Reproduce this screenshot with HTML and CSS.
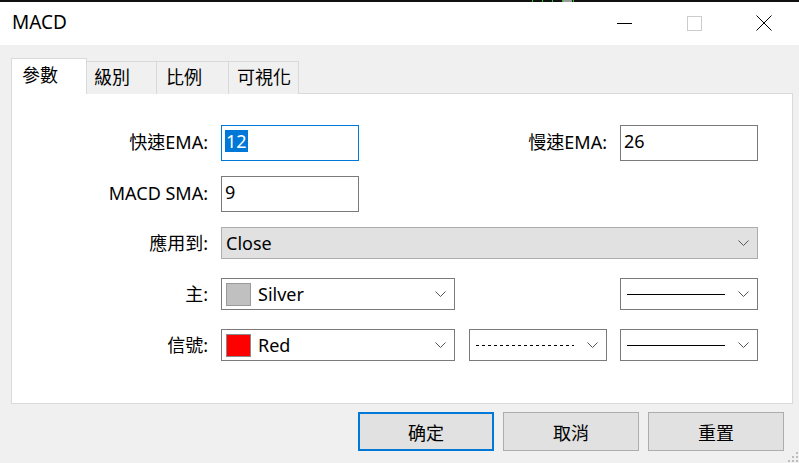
FILE: index.html
```html
<!DOCTYPE html>
<html lang="zh-Hant">
<head>
<meta charset="utf-8">
<title>MACD</title>
<link rel="stylesheet" href="styles.css">
</head>
<body>
<div class="window">
  <div class="topline">
    <span class="mark"></span><span class="mark"></span><span class="mark"></span><span class="mark"></span><span class="markbox"></span><span class="mark"></span>
  </div>
  <header class="titlebar">
    <span class="title">MACD</span>
    <div class="controls">
      <span class="ctl"><svg width="15" height="15" viewBox="0 0 15 15"><line x1="0" y1="7.5" x2="15" y2="7.5" stroke="#000" stroke-width="1"/></svg></span>
      <span class="ctl"><svg width="15" height="15" viewBox="0 0 15 15"><rect x="0.5" y="0.5" width="14" height="14" fill="none" stroke="#cccccc" stroke-width="1"/></svg></span>
      <span class="ctl"><svg width="16" height="16" viewBox="0 0 16 16"><path d="M0.5 0.5 L15.5 15.5 M15.5 0.5 L0.5 15.5" stroke="#000" stroke-width="1" fill="none"/></svg></span>
    </div>
  </header>
  <main class="body">
    <nav class="tabs">
      <span class="tab active">參數</span>
      <span class="tab t2">級別</span>
      <span class="tab t3">比例</span>
      <span class="tab t4">可視化</span>
    </nav>
    <section class="panel">
      <div class="row r1">
        <label class="lbl">快速EMA:</label>
        <div class="edit focus c-a"><span class="sel">12</span></div>
        <label class="lbl c-mid">慢速EMA:</label>
        <div class="edit c-f">26</div>
      </div>
      <div class="row r2">
        <label class="lbl">MACD SMA:</label>
        <div class="edit c-a">9</div>
      </div>
      <div class="row r3">
        <label class="lbl">應用到:</label>
        <div class="combo grey c-all"><span class="val">Close</span>
          <svg class="chev" width="11" height="6" viewBox="0 0 11 6"><polyline points="0.5,0.5 5.5,5.5 10.5,0.5" fill="none" stroke="#555" stroke-width="1"/></svg>
        </div>
      </div>
      <div class="row r4">
        <label class="lbl">主:</label>
        <div class="combo c-ab"><span class="swatch silver"></span><span class="val">Silver</span>
          <svg class="chev" width="11" height="6" viewBox="0 0 11 6"><polyline points="0.5,0.5 5.5,5.5 10.5,0.5" fill="none" stroke="#555" stroke-width="1"/></svg>
        </div>
        <div class="combo c-f"><span class="line solid"></span>
          <svg class="chev" width="11" height="6" viewBox="0 0 11 6"><polyline points="0.5,0.5 5.5,5.5 10.5,0.5" fill="none" stroke="#555" stroke-width="1"/></svg>
        </div>
      </div>
      <div class="row r5">
        <label class="lbl">信號:</label>
        <div class="combo c-ab"><span class="swatch red"></span><span class="val">Red</span>
          <svg class="chev" width="11" height="6" viewBox="0 0 11 6"><polyline points="0.5,0.5 5.5,5.5 10.5,0.5" fill="none" stroke="#555" stroke-width="1"/></svg>
        </div>
        <div class="combo c-d"><span class="line dashed"></span>
          <svg class="chev" width="11" height="6" viewBox="0 0 11 6"><polyline points="0.5,0.5 5.5,5.5 10.5,0.5" fill="none" stroke="#555" stroke-width="1"/></svg>
        </div>
        <div class="combo c-f"><span class="line solid"></span>
          <svg class="chev" width="11" height="6" viewBox="0 0 11 6"><polyline points="0.5,0.5 5.5,5.5 10.5,0.5" fill="none" stroke="#555" stroke-width="1"/></svg>
        </div>
      </div>
    </section>
    <footer class="buttons">
      <button class="btn default">确定</button>
      <button class="btn">取消</button>
      <button class="btn">重置</button>
    </footer>
  </main>
  <svg class="grip" width="12" height="12" viewBox="0 0 12 12">
    <rect x="9" y="1" width="2" height="2" fill="#bdbdbd"/>
    <rect x="5" y="5" width="2" height="2" fill="#bdbdbd"/>
    <rect x="9" y="5" width="2" height="2" fill="#bdbdbd"/>
    <rect x="1" y="9" width="2" height="2" fill="#bdbdbd"/>
    <rect x="5" y="9" width="2" height="2" fill="#bdbdbd"/>
    <rect x="9" y="9" width="2" height="2" fill="#bdbdbd"/>
  </svg>
</div>
</body>
</html>
```

FILE: styles.css
```css
* { box-sizing: border-box; }
html, body { margin: 0; padding: 0; }
body {
  width: 799px;
  height: 463px;
  overflow: hidden;
  font-family: "Noto Sans", "Noto Sans CJK TC", sans-serif;
  font-size: 18px;
  color: #000;
  background: #f0f0f0;
}
.window {
  position: relative;
  width: 799px;
  height: 463px;
  background: #f0f0f0;
}
.topline {
  height: 2px;
  background: #111;
  display: flex;
  padding-left: 532px;
}
.mark { width: 1px; height: 2px; background: #22c322; margin-right: 9px; }
.markbox { width: 9px; height: 2px; background: #9a9a9a; margin-left: -9px; margin-right: 1px; }
.titlebar {
  height: 43px;
  background: #fff;
  display: flex;
  align-items: center;
  justify-content: space-between;
}
.title {
  padding-left: 12px;
  font-size: 19px;
  line-height: 40px;
  height: 43px;
}
.controls { display: flex; height: 43px; }
.ctl {
  width: 70px;
  height: 43px;
  display: flex;
  align-items: center;
  justify-content: center;
  padding-bottom: 1px;
}
.body {
  padding: 13px 0 0 11px;
}
.tabs {
  display: flex;
  align-items: flex-end;
  height: 36px;
  margin-bottom: -1px;
  position: relative;
  z-index: 1;
}
.tab {
  height: 33px;
  line-height: 31px;
  background: #f0f0f0;
  border-top: 1px solid #d9d9d9;
  border-right: 1px solid #d9d9d9;
}
.tab.active {
  height: 36px;
  width: 76px;
  line-height: 33px;
  padding-left: 10px;
  background: #fff;
  border-left: 1px solid #d9d9d9;
}
.t2 { width: 70px; padding-left: 7px; }
.t3 { width: 72px; padding-left: 9px; }
.t4 { width: 70px; padding-left: 8px; }
.panel {
  width: 782px;
  height: 311px;
  background: #fff;
  border: 1px solid #d9d9d9;
  padding-top: 31px;
}
.row {
  display: grid;
  grid-template-columns: 196px 13px 138px 96px 14px 138px 13px 138px;
  align-items: center;
}
.r1, .r2 { height: 36px; }
.r2 { margin-top: 15px; }
.r3 { height: 32px; margin-top: 15px; }
.r4, .r5 { height: 32px; margin-top: 19px; }
.lbl {
  grid-column: 1;
  text-align: right;
  line-height: 24px;
  white-space: nowrap;
}
.r1 .lbl, .r2 .lbl { margin-top: -3px; }
.c-mid { grid-column: 4 / 7; }
.c-a { grid-column: 3; }
.c-ab { grid-column: 3 / 5; }
.c-d { grid-column: 6; }
.c-f { grid-column: 8; }
.c-all { grid-column: 3 / 9; }
.edit {
  height: 36px;
  border: 1px solid #7a7a7a;
  background: #fff;
  padding: 4px 0 0 3px;
  line-height: 22px;
}
.edit.focus { border-color: #0078d7; }
.sel {
  display: inline-block;
  background: #0078d7;
  color: #fff;
  padding: 0 1px;
  height: 22px;
}
.combo {
  height: 32px;
  border: 1px solid #7a7a7a;
  background: #fff;
  display: flex;
  align-items: center;
  padding: 0 8px 0 4px;
  line-height: 22px;
}
.combo.grey {
  background: #e1e1e1;
  border-color: #adadad;
}
.combo .val { flex: 1; padding-left: 0; }
.swatch {
  width: 25px;
  height: 23px;
  border: 1px solid #9a9a9a;
  margin-right: 7px;
}
.silver { background: #c0c0c0; }
.red { background: #ff0000; border-color: #8a8a8a; }
.line {
  flex: none;
  width: 98px;
  height: 1px;
  margin-left: 2px;
  margin-right: auto;
}
.line.solid { background: #000; }
.line.dashed {
  background: repeating-linear-gradient(to right, #000 0 3px, transparent 3px 6px);
}
.chev { flex: none; margin-left: 8px; }
.buttons {
  display: flex;
  justify-content: flex-end;
  gap: 9px;
  padding-right: 15px;
  margin-top: 8px;
}
.btn {
  width: 136px;
  height: 39px;
  font-family: inherit;
  font-size: 18px;
  background: #e1e1e1;
  border: 1px solid #adadad;
  color: #000;
  padding: 0;
}
.btn.default { border: 2px solid #0078d7; }
.grip {
  position: absolute;
  right: 0;
  bottom: 0;
}
```
